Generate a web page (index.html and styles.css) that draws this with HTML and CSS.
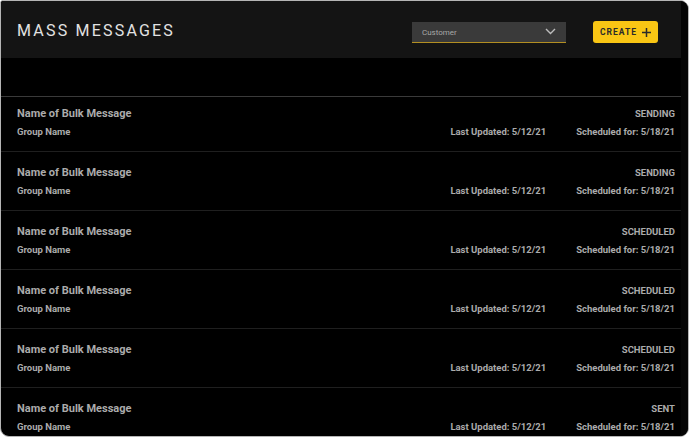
FILE: index.html
```html
<!DOCTYPE html>
<html>
<head>
<meta charset="utf-8">
<link rel="stylesheet" href="styles.css">
</head>
<body>
<div class="frame">
  <div class="main">
    <header class="header">
      <h1 class="title">MASS MESSAGES</h1>
      <div class="actions">
        <div class="select">
          <span>Customer</span>
          <svg class="chev" width="11" height="7" viewBox="0 0 11 7"><path d="M1 1l4.5 4.5L10 1" fill="none" stroke="#bdbdbd" stroke-width="1.4"/></svg>
        </div>
        <button class="create">CREATE
          <svg width="9" height="9" viewBox="0 0 9 9"><path d="M4.5 0v9M0 4.5h9" stroke="#2a2a2a" stroke-width="1.5"/></svg>
        </button>
      </div>
    </header>
    <div class="spacer"></div>
    <div class="list">
      <div class="row first">
        <div class="left"><div class="name">Name of Bulk Message</div><div class="group">Group Name</div></div>
        <div class="right"><div class="status">SENDING</div><div class="dates"><span>Last Updated: 5/12/21</span><span>Scheduled for: 5/18/21</span></div></div>
      </div>
      <div class="row">
        <div class="left"><div class="name">Name of Bulk Message</div><div class="group">Group Name</div></div>
        <div class="right"><div class="status">SENDING</div><div class="dates"><span>Last Updated: 5/12/21</span><span>Scheduled for: 5/18/21</span></div></div>
      </div>
      <div class="row">
        <div class="left"><div class="name">Name of Bulk Message</div><div class="group">Group Name</div></div>
        <div class="right"><div class="status">SCHEDULED</div><div class="dates"><span>Last Updated: 5/12/21</span><span>Scheduled for: 5/18/21</span></div></div>
      </div>
      <div class="row">
        <div class="left"><div class="name">Name of Bulk Message</div><div class="group">Group Name</div></div>
        <div class="right"><div class="status">SCHEDULED</div><div class="dates"><span>Last Updated: 5/12/21</span><span>Scheduled for: 5/18/21</span></div></div>
      </div>
      <div class="row">
        <div class="left"><div class="name">Name of Bulk Message</div><div class="group">Group Name</div></div>
        <div class="right"><div class="status">SCHEDULED</div><div class="dates"><span>Last Updated: 5/12/21</span><span>Scheduled for: 5/18/21</span></div></div>
      </div>
      <div class="row">
        <div class="left"><div class="name">Name of Bulk Message</div><div class="group">Group Name</div></div>
        <div class="right"><div class="status">SENT</div><div class="dates"><span>Last Updated: 5/12/21</span><span>Scheduled for: 5/18/21</span></div></div>
      </div>
    </div>
  </div>
  <div class="track"></div>
</div>
</body>
</html>
```

FILE: styles.css
```css
html, body {
  margin: 0;
  padding: 0;
  background: #ffffff;
}
body {
  font-family: Roboto, "Liberation Sans", sans-serif;
}
.frame {
  width: 687px;
  height: 435px;
  border: 1px solid #b5b5b5;
  border-radius: 3px 9px 9px 9px;
  background: #000;
  overflow: hidden;
  display: flex;
}
.main {
  width: 680px;
  display: flex;
  flex-direction: column;
}
.track {
  flex: 1;
  background: #050505;
}
.header {
  height: 57px;
  background: #141414;
  display: flex;
  align-items: center;
  justify-content: space-between;
  padding: 0 23px 0 16px;
  flex-shrink: 0;
}
.title {
  margin: 0;
  font-size: 16px;
  font-weight: 400;
  letter-spacing: 2.2px;
  color: #e2e2e2;
  line-height: 20px;
  margin-top: 2px;
}
.actions {
  display: flex;
  align-items: center;
  gap: 27px;
  margin-top: 5px;
}
.select {
  width: 134px;
  height: 20px;
  background: #3a3a3a;
  border-bottom: 1px solid #b38f22;
  display: flex;
  align-items: center;
  justify-content: space-between;
  padding: 0 10px 0 10px;
  font-size: 8px;
  color: #a8a8a8;
  box-sizing: content-box;
}
.select span { margin-top: 1px; }
.chev { margin-top: -1px; }
.create {
  width: 65px;
  height: 22px;
  border: none;
  border-radius: 3px;
  background: #f9c614;
  color: #2a2a2a;
  font-family: Roboto, "Liberation Sans", sans-serif;
  font-weight: 700;
  font-size: 8.5px;
  letter-spacing: 1px;
  display: flex;
  align-items: center;
  justify-content: center;
  gap: 5px;
  padding: 0;
}
.spacer {
  height: 38px;
  border-bottom: 1px solid #3a3a3a;
  flex-shrink: 0;
}
.list {
  display: flex;
  flex-direction: column;
}
.row {
  height: 59px;
  box-sizing: border-box;
  padding: 14px 6px 0 16px;
  border-top: 1px solid #1f1f1f;
  display: flex;
  justify-content: space-between;
  flex-shrink: 0;
}
.row.first {
  border-top: none;
  height: 54px;
  padding-top: 10px;
}
.name {
  font-size: 11px;
  font-weight: 700;
  color: #ababab;
  line-height: 14px;
}
.group {
  font-size: 9.5px;
  font-weight: 700;
  color: #ababab;
  line-height: 12px;
  margin-top: 5px;
}
.right {
  display: flex;
  flex-direction: column;
  align-items: flex-end;
}
.status {
  font-size: 9.5px;
  font-weight: 700;
  color: #ababab;
  line-height: 14px;
}
.dates {
  display: flex;
  gap: 30px;
  font-size: 9.5px;
  font-weight: 700;
  color: #ababab;
  line-height: 12px;
  margin-top: 5px;
}
```
